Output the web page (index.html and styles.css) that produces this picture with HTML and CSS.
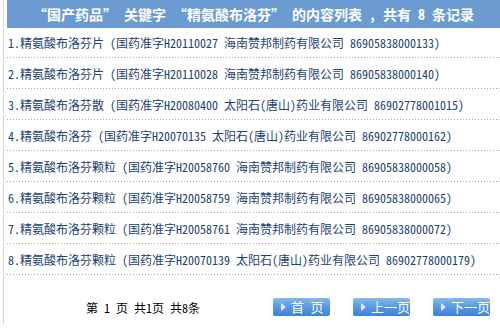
FILE: index.html
```html
<!DOCTYPE html>
<html lang="zh-CN">
<head>
    <meta charset="UTF-8">
    <title>内容列表</title>
    <link rel="stylesheet" href="styles.css">
</head>
<body>
    <div class="page">
        <div class="list-title">“国产药品” 关键字 “精氨酸布洛芬” 的内容列表 ， 共有 8 条记录</div>

        <ul class="drug-list">
            <li>1.精氨酸布洛芬片 (国药准字H20110027 海南赞邦制药有限公司 86905838000133)</li>
            <li>2.精氨酸布洛芬片 (国药准字H20110028 海南赞邦制药有限公司 86905838000140)</li>
            <li>3.精氨酸布洛芬散 (国药准字H20080400 太阳石(唐山)药业有限公司 86902778001015)</li>
            <li>4.精氨酸布洛芬 (国药准字H20070135 太阳石(唐山)药业有限公司 86902778000162)</li>
            <li>5.精氨酸布洛芬颗粒 (国药准字H20058760 海南赞邦制药有限公司 86905838000058)</li>
            <li>6.精氨酸布洛芬颗粒 (国药准字H20058759 海南赞邦制药有限公司 86905838000065)</li>
            <li>7.精氨酸布洛芬颗粒 (国药准字H20058761 海南赞邦制药有限公司 86905838000072)</li>
            <li>8.精氨酸布洛芬颗粒 (国药准字H20070139 太阳石(唐山)药业有限公司 86902778000179)</li>
        </ul>

        <div class="pager">
            <span class="pager-info">第 1 页 共1页 共8条</span>
            <a class="pager-btn" href="#">首 页</a>
            <a class="pager-btn" href="#">上一页</a>
            <a class="pager-btn" href="#">下一页</a>
        </div>
    </div>
</body>
</html>
```

FILE: styles.css
```css
/* General Styles */
body {
    margin: 0;
    padding: 0;
    background: #fff;
    font-family: "Noto Sans CJK SC", "Liberation Sans", sans-serif;
    font-size: 12px;
    font-feature-settings: "hwid";
}

.page {
    margin-left: 3px;
    padding-left: 3px;
    border-left: 1px solid #d6d6d6;
    height: 324px;
}

.list-title {
    height: 28px;
    line-height: 28px;
    background: #6b9bd1;
    color: #fff;
    font-size: 14px;
    font-weight: bold;
    text-align: center;
    white-space: nowrap;
}

.drug-list {
    list-style: none;
    margin: 0;
    padding: 0;
}

.drug-list li {
    height: 30px;
    line-height: 30px;
    padding-left: 1px;
    color: #1d3f72;
    white-space: nowrap;
    border-bottom: 1px solid transparent;
    background: linear-gradient(to right, #a8a8a8 1px, transparent 1px) repeat-x left bottom / 3px 1px;
}

.pager {
    display: flex;
    align-items: center;
    gap: 23px;
    padding: 22px 10px 0 79px;
}

.pager-info {
    margin-right: auto;
    color: #000;
    font-size: 12px;
}

.pager-btn {
    position: relative;
    width: 57px;
    height: 18px;
    line-height: 18px;
    box-sizing: border-box;
    padding-left: 18px;
    border-radius: 2px;
    background: linear-gradient(to bottom, #86b9ee 0%, #5b9be2 45%, #3f82d6 100%);
    color: #fff;
    font-size: 13px;
    text-decoration: none;
    white-space: nowrap;
}

.pager-btn::before {
    content: "";
    position: absolute;
    left: 8px;
    top: 5px;
    border-left: 5px solid #dcecff;
    border-top: 4px solid transparent;
    border-bottom: 4px solid transparent;
}
```
